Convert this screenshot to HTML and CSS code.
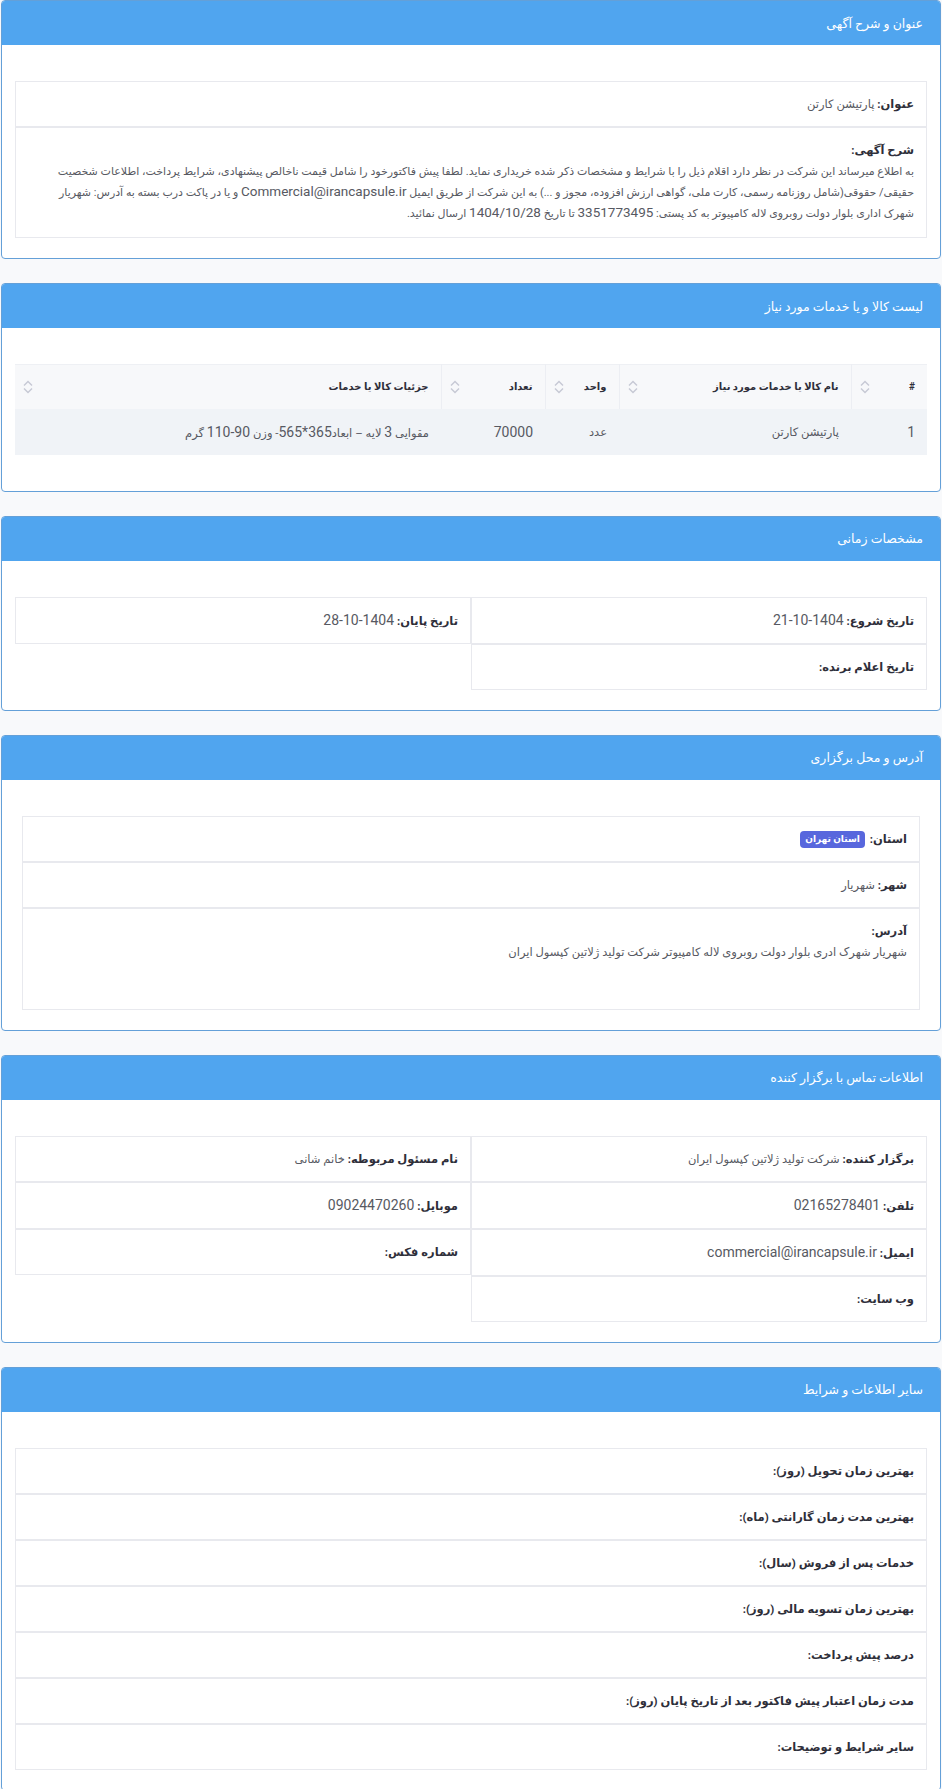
FILE: index.html
```html
<!DOCTYPE html>
<html lang="fa" dir="rtl">
<head>
    <meta charset="UTF-8">
    <meta name="viewport" content="width=device-width, initial-scale=1.0">
    <title>جزئیات آگهی</title>
    <link rel="stylesheet" href="styles.css">
</head>
<body>
<div class="page">

    <div class="card">
        <div class="card-head"><h3>عنوان و شرح آگهی</h3></div>
        <div class="card-body">
            <div class="cell"><b>عنوان:</b> پارتیشن کارتن</div>
            <div class="cell cell-text">
                <b>شرح آگهی:</b><br>
                به اطلاع میرساند این شرکت در نظر دارد اقلام ذیل را با شرایط و مشخصات ذکر شده خریداری نماید. لطفا پیش فاکتورخود را شامل قیمت ناخالص پیشنهادی، شرایط پرداخت، اطلاعات شخصیت حقیقی/ حقوقی(شامل روزنامه رسمی، کارت ملی، گواهی ارزش افزوده، مجوز و ...) به این شرکت از طریق ایمیل <span class="num">Commercial@irancapsule.ir</span> و یا در پاکت درب بسته به آدرس: شهریار شهرک اداری بلوار دولت روبروی لاله کامپیوتر به کد پستی: <span class="num">3351773495</span> تا تاریخ <span class="num">1404/10/28</span> ارسال نمائید.
            </div>
        </div>
    </div>

    <div class="card">
        <div class="card-head"><h3>لیست کالا و یا خدمات مورد نیاز</h3></div>
        <div class="card-body body-table">
            <table class="items">
                <thead>
                    <tr>
                        <th class="c-num"><div class="th-in"><span>#</span><svg class="sort" viewBox="0 0 10 14"><polyline points="1,5.5 5,1.5 9,5.5"/><polyline points="1,8.5 5,12.5 9,8.5"/></svg></div></th>
                        <th class="c-name"><div class="th-in"><span>نام کالا یا خدمات مورد نیاز</span><svg class="sort" viewBox="0 0 10 14"><polyline points="1,5.5 5,1.5 9,5.5"/><polyline points="1,8.5 5,12.5 9,8.5"/></svg></div></th>
                        <th class="c-unit"><div class="th-in"><span>واحد</span><svg class="sort" viewBox="0 0 10 14"><polyline points="1,5.5 5,1.5 9,5.5"/><polyline points="1,8.5 5,12.5 9,8.5"/></svg></div></th>
                        <th class="c-qty"><div class="th-in"><span>تعداد</span><svg class="sort" viewBox="0 0 10 14"><polyline points="1,5.5 5,1.5 9,5.5"/><polyline points="1,8.5 5,12.5 9,8.5"/></svg></div></th>
                        <th class="c-desc"><div class="th-in"><span>جزئیات کالا یا خدمات</span><svg class="sort" viewBox="0 0 10 14"><polyline points="1,5.5 5,1.5 9,5.5"/><polyline points="1,8.5 5,12.5 9,8.5"/></svg></div></th>
                    </tr>
                </thead>
                <tbody>
                    <tr>
                        <td class="num">1</td>
                        <td>پارتیشن کارتن</td>
                        <td>عدد</td>
                        <td class="num">70000</td>
                        <td>مقوایی <span class="num">3</span> لایه – ابعاد<span class="num">365*565</span>- وزن <span class="num">90-110</span> گرم</td>
                    </tr>
                </tbody>
            </table>
        </div>
    </div>

    <div class="card">
        <div class="card-head"><h3>مشخصات زمانی</h3></div>
        <div class="card-body">
            <div class="two-col">
                <div class="col">
                    <div class="cell"><b>تاریخ شروع:</b> <span class="num">1404-10-21</span></div>
                    <div class="cell"><b>تاریخ اعلام برنده:</b></div>
                </div>
                <div class="col">
                    <div class="cell"><b>تاریخ پایان:</b> <span class="num">1404-10-28</span></div>
                </div>
            </div>
        </div>
    </div>

    <div class="card">
        <div class="card-head"><h3>آدرس و محل برگزاری</h3></div>
        <div class="card-body">
            <div class="address">
                <div class="cell"><b class="lbl">استان:</b> <span class="badge">استان تهران</span></div>
                <div class="cell"><b>شهر:</b> شهریار</div>
                <div class="cell cell-addr">
                    <b>آدرس:</b><br>
                    شهریار شهرک ادری بلوار دولت روبروی لاله کامپیوتر شرکت تولید ژلاتین کپسول ایران
                </div>
            </div>
        </div>
    </div>

    <div class="card">
        <div class="card-head"><h3>اطلاعات تماس با برگزار کننده</h3></div>
        <div class="card-body">
            <div class="two-col">
                <div class="col">
                    <div class="cell"><b>برگزار کننده:</b> شرکت تولید ژلاتین کپسول ایران</div>
                    <div class="cell"><b>تلفن:</b> <span class="num">02165278401</span></div>
                    <div class="cell"><b>ایمیل:</b> <span class="num">commercial@irancapsule.ir</span></div>
                    <div class="cell"><b>وب سایت:</b></div>
                </div>
                <div class="col">
                    <div class="cell"><b>نام مسئول مربوطه:</b> خانم شانی</div>
                    <div class="cell"><b>موبایل:</b> <span class="num">09024470260</span></div>
                    <div class="cell"><b>شماره فکس:</b></div>
                </div>
            </div>
        </div>
    </div>

    <div class="card">
        <div class="card-head"><h3>سایر اطلاعات و شرایط</h3></div>
        <div class="card-body">
            <div class="cell"><b>بهترین زمان تحویل (روز):</b></div>
            <div class="cell"><b>بهترین مدت زمان گارانتی (ماه):</b></div>
            <div class="cell"><b>خدمات پس از فروش (سال):</b></div>
            <div class="cell"><b>بهترین زمان تسویه مالی (روز):</b></div>
            <div class="cell"><b>درصد پیش پرداخت:</b></div>
            <div class="cell"><b>مدت زمان اعتبار پیش فاکتور بعد از تاریخ پایان (روز):</b></div>
            <div class="cell"><b>سایر شرایط و توضیحات:</b></div>
        </div>
    </div>

</div>
</body>
</html>
```

FILE: styles.css
```css
html {
    direction: rtl;
}
body {
    margin: 0;
    background: #f8f9fb;
    font-family: Roboto, "DejaVu Sans", sans-serif;
    font-size: 11.5px;
    color: #575962;
}
.page {
    padding: 0 1px 2px 1px;
}
.card {
    background: #fff;
    border: 1px solid #64a0d8;
    border-radius: 4px;
    margin-bottom: 24px;
    overflow: hidden;
}
.card:last-child {
    margin-bottom: 0;
}
.card-head {
    height: 44px;
    display: flex;
    align-items: center;
    padding: 0 17px;
    background: #50a5ef;
}
.card-head h3 {
    margin: 0;
    font-size: 12.5px;
    font-weight: normal;
    color: #fff;
}
.card-body {
    padding: 36px 13px 20px 13px;
}
.body-table {
    padding-bottom: 36px;
}
.cell {
    border: 1px solid #e8e9ee;
    padding: 12px 12px;
    line-height: 20px;
    min-height: 20px;
}
.cell b {
    color: #2f2f3a;
    font-weight: bold;
}
.cell-text {
    font-size: 11px;
    line-height: 21px;
    padding-bottom: 13px;
}
.cell-text b {
    font-size: 11.5px;
}
.num {
    font-size: 14px;
}
.cell-text .num {
    font-size: 13.5px;
    line-height: 16px;
}
.two-col {
    display: grid;
    grid-template-columns: 1fr 1fr;
    align-items: start;
}
.address {
    margin: 0 7px;
}
.cell-addr {
    line-height: 21px;
    padding-bottom: 46px;
}
.lbl {
    margin-left: 2px;
}
.badge {
    display: inline-block;
    background: #5867dd;
    color: #fff;
    font-size: 9px;
    font-weight: bold;
    line-height: 17px;
    padding: 0 5px;
    border-radius: 4px;
    vertical-align: middle;
}
.items {
    width: 100%;
    border-collapse: collapse;
    table-layout: fixed;
}
.items th {
    box-sizing: border-box;
    background: #f7f8fa;
    border-top: 1px solid #eef0f4;
    border-left: 1px solid #eceef3;
    height: 44px;
    padding: 0 12px 0 8px;
    text-align: right;
    font-size: 10px;
    font-weight: bold;
    color: #2f2f3a;
}
.items th:last-child {
    border-left: none;
}
.th-in {
    display: flex;
    justify-content: space-between;
    align-items: center;
}
.sort {
    width: 10px;
    height: 14px;
    fill: none;
    stroke: #c6c9d4;
    stroke-width: 1.4;
}
.items td {
    background: #f0f3f7;
    height: 46px;
    padding: 0 12px;
    text-align: right;
    color: #575962;
}
.c-num { width: 76px; }
.c-name { width: 232px; }
.c-unit { width: 74px; }
.c-qty { width: 104px; }
```
